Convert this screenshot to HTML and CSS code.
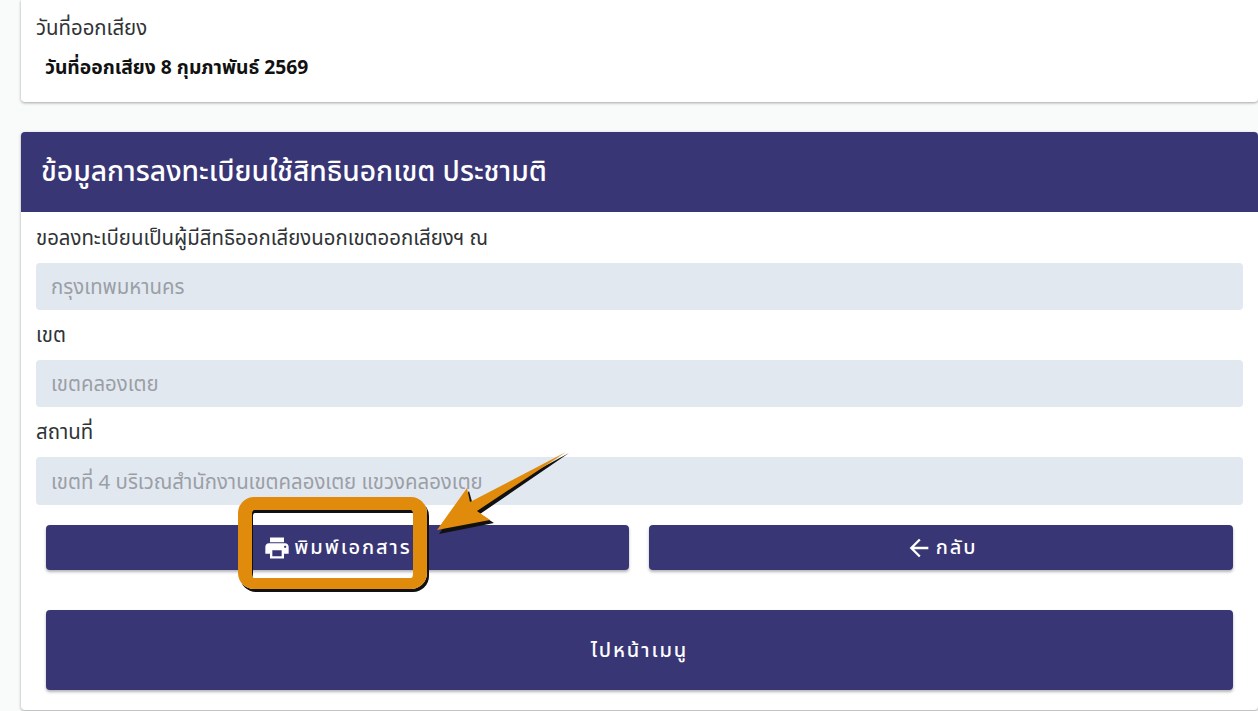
FILE: index.html
```html
<!DOCTYPE html>
<html lang="th">
  <head>
    <meta charset="UTF-8" />
    <meta name="viewport" content="width=device-width, initial-scale=1.0" />
    <title>ข้อมูลการลงทะเบียน</title>
    <link rel="stylesheet" href="styles.css">
  </head>
  <body>
    <div class="page">
      <section class="card card-date">
        <p class="label">วันที่ออกเสียง</p>
        <p class="date-value">วันที่ออกเสียง 8 กุมภาพันธ์ 2569</p>
      </section>

      <section class="card card-info">
        <h2 class="card-head">ข้อมูลการลงทะเบียนใช้สิทธินอกเขต ประชามติ</h2>
        <form class="fields">
          <label class="label">ขอลงทะเบียนเป็นผู้มีสิทธิออกเสียงนอกเขตออกเสียงฯ ณ</label>
          <input class="field" type="text" placeholder="กรุงเทพมหานคร" disabled />
          <label class="label">เขต</label>
          <input class="field" type="text" placeholder="เขตคลองเตย" disabled />
          <label class="label">สถานที่</label>
          <input class="field" type="text" placeholder="เขตที่ 4 บริเวณสำนักงานเขตคลองเตย แขวงคลองเตย" disabled />
        </form>
        <div class="actions">
          <div class="btn-row">
            <button class="btn" type="button">
              <svg class="icon" viewBox="0 0 24 24"><path d="M19 8H5c-1.66 0-3 1.34-3 3v6h4v4h12v-4h4v-6c0-1.66-1.34-3-3-3zm-3 11H8v-5h8v5zm3-7c-.55 0-1-.45-1-1s.45-1 1-1 1 .45 1 1-.45 1-1 1zm-1-9H6v4h12V3z"/></svg>
              พิมพ์เอกสาร
            </button>
            <button class="btn" type="button">
              <svg class="icon" viewBox="0 0 24 24"><path d="M20 11H7.83l5.59-5.59L12 4l-8 8 8 8 1.41-1.41L7.83 13H20v-2z"/></svg>
              กลับ
            </button>
          </div>
          <button class="btn btn-big" type="button">ไปหน้าเมนู</button>
        </div>
      </section>
    </div>

    <!-- callout drawn over the screenshot -->
    <div class="callout-box"></div>
    <svg class="callout-arrow" viewBox="0 0 150 95">
      <path class="arrow-shadow" d="M139 8 L50 69 L64 78 L9 89 L39 46 L43 60 Z" />
      <path class="arrow-fill" d="M136 7 L47 66 L60 75 L7 85 L37 43 L40 57 Z" />
    </svg>
  </body>
</html>
```

FILE: styles.css
```css
*{
    padding: 0;
    margin: 0;
    box-sizing: border-box;
}
html, body{
    height: 100%;
    overflow: hidden;
}
body{
    background-color: #f9fafa;
    font-family: "Noto Sans Thai", "Noto Sans", "Noto Sans CJK SC", sans-serif;
    color: #212529;
}
.page{
    padding-left: 21px;
    display: flex;
    flex-direction: column;
    gap: 30px;
}
.card{
    background-color: white;
    border-radius: 4px;
    box-shadow: 0 1px 3px rgba(0,0,0,.35);
}
.card-date{
    height: 102px;
    padding: 15px 15px 0;
    border-top-left-radius: 0;
    border-top-right-radius: 0;
}
.label{
    display: block;
    padding-top: 2px;
    font-size: 20.4px;
    line-height: 24px;
    color: #2f3336;
}
.date-value{
    margin: 16px 0 0 9px;
    font-size: 19.3px;
    line-height: 24px;
    font-weight: 700;
    color: #111;
}
.card-info{
    height: 578px;
}
.card-head{
    height: 80px;
    padding: 0 20px;
    display: flex;
    align-items: center;
    background-color: #393676;
    color: white;
    font-size: 28.2px;
    font-weight: 500;
    border-top-left-radius: 4px;
    border-top-right-radius: 4px;
}
.fields{
    display: flex;
    flex-direction: column;
    padding: 13px 15px 0;
}
.field{
    height: 47px;
    margin: 12px 0 12px;
    padding: 2px 15px 0;
    width: 100%;
    border: none;
    border-radius: 4px;
    background-color: #e2e8f0;
    font-family: inherit;
    font-size: 20.4px;
}
.field:last-child{
    height: 48px;
    margin-bottom: 0;
}
.field::placeholder{
    color: #9a9fa6;
    opacity: 1;
}
.actions{
    padding: 20px 25px 0;
    display: flex;
    flex-direction: column;
    gap: 40px;
}
.btn-row{
    display: grid;
    grid-template-columns: 583px 584px;
    gap: 20px;
}
.btn{
    height: 45px;
    padding-top: 1px;
    display: flex;
    align-items: center;
    justify-content: center;
    gap: 3px;
    border: none;
    border-radius: 4px;
    background-color: #393676;
    color: white;
    font-family: inherit;
    font-size: 20px;
    font-weight: 500;
    letter-spacing: 1.9px;
    box-shadow: 0 2px 3px rgba(0,0,0,.3);
}
.btn-big{
    height: 80px;
}
.icon{
    width: 28px;
    height: 28px;
    fill: white;
}
.callout-box{
    position: absolute;
    left: 238px;
    top: 497px;
    width: 189px;
    height: 92px;
    border: 14px solid #e08b0b;
    border-top-width: 13px;
    border-bottom-width: 11px;
    border-radius: 16px;
    box-shadow: 2px 3px 0 #111, inset 1px 3px 0 #111;
}
.callout-arrow{
    position: absolute;
    left: 430px;
    top: 445px;
    width: 150px;
    height: 95px;
}
.arrow-shadow{
    fill: #111;
}
.arrow-fill{
    fill: #e08b0b;
}
```
